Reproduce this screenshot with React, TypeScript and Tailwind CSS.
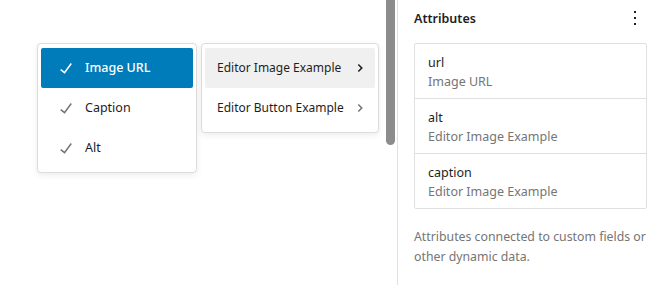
import React from "react";

const font = { fontFamily: '"Noto Sans", "Open Sans", sans-serif' };

function Check({ color }: { color: string }) {
  return (
    <svg width="24" height="24" viewBox="0 0 24 24" className="shrink-0">
      <path d="M16.7 7.1l-6.3 8.5-3.3-2.5-.9 1.2 4.5 3.4L17.9 7.9z" fill={color} />
    </svg>
  );
}

function Chevron({ color }: { color: string }) {
  return (
    <svg width="24" height="24" viewBox="0 0 24 24" className="shrink-0">
      <path
        d="M10.8622 8.04053L14.8477 12.0286L10.8622 16.0167L9.80162 14.9561L12.7258 12.0286L9.80162 9.10094L10.8622 8.04053Z"
        fill={color}
      />
    </svg>
  );
}

function MoreVertical() {
  return (
    <svg width="24" height="24" viewBox="0 0 24 24">
      <path d="M13 19h-2v-2h2v2zm0-6h-2v-2h2v2zm0-6h-2V5h2v2z" fill="#1e1e1e" />
    </svg>
  );
}

const fieldItems = [
  { label: "Image URL", active: true },
  { label: "Caption", active: false },
  { label: "Alt", active: false },
];

const sources = [
  { label: "Editor Image Example", active: true },
  { label: "Editor Button Example", active: false },
];

const attrs = [
  { name: "url", value: "Image URL" },
  { name: "alt", value: "Editor Image Example" },
  { name: "caption", value: "Editor Image Example" },
];

export default function App() {
  return (
    <div className="w-[658px] h-[285px] bg-white flex overflow-hidden" style={font}>
      <div className="w-[386px] shrink-0 pl-[37px] pt-[43px] flex items-start gap-[4px]">
        <div className="w-[160px] bg-white border border-[#dcdcdc] rounded-[4px] shadow-[0_2px_6px_rgba(0,0,0,0.08)] px-[3px] py-[4px] flex flex-col">
          {fieldItems.map((it) => (
            <div
              key={it.label}
              className={
                it.active
                  ? "h-[40px] flex items-center pl-[13px] rounded-[2px] bg-[#007cba] text-white"
                  : "h-[40px] flex items-center pl-[13px] rounded-[2px] text-[#1e1e1e]"
              }
            >
              <Check color={it.active ? "#ffffff" : "#757575"} />
              <span className={it.active ? "ml-[7px] text-[12.5px] font-medium" : "ml-[7px] text-[12.5px]"}>
                {it.label}
              </span>
            </div>
          ))}
        </div>
        <div className="w-[178px] bg-white border border-[#dcdcdc] rounded-[4px] shadow-[0_2px_6px_rgba(0,0,0,0.08)] px-[3px] py-[4px] flex flex-col">
          {sources.map((it) => (
            <div
              key={it.label}
              className={
                it.active
                  ? "h-[40px] flex items-center justify-between pl-[12px] pr-[3px] rounded-[2px] bg-[#f0f0f0] text-[#1e1e1e]"
                  : "h-[40px] flex items-center justify-between pl-[12px] pr-[3px] rounded-[2px] text-[#1e1e1e]"
              }
            >
              <span className="text-[12px] whitespace-nowrap">{it.label}</span>
              <Chevron color={it.active ? "#1e1e1e" : "#757575"} />
            </div>
          ))}
        </div>
      </div>
      <div className="w-[11px] shrink-0">
        <div className="w-[9px] h-[145px] bg-[#8c8c8c] rounded-b-[5px]" />
      </div>
      <div className="flex-1 border-l border-[#e0e0e0] pl-[16px] pr-[11px]">
        <div className="mt-[6px] h-[24px] flex items-center justify-between">
          <span className="pt-[2px] text-[12.5px] font-semibold text-[#1e1e1e]">Attributes</span>
          <MoreVertical />
        </div>
        <div className="mt-[13px] border border-[#e0e0e0] rounded-[2px]">
          {attrs.map((a, i) => (
            <div
              key={a.name}
              className={
                i > 0
                  ? "border-t border-[#e0e0e0] pl-[13px] pt-[9px] pb-[7px] text-[12.5px] leading-[19px]"
                  : "pl-[13px] pt-[9px] pb-[7px] text-[12.5px] leading-[19px]"
              }
            >
              <div className="text-[#1e1e1e]">{a.name}</div>
              <div className="text-[#757575]">{a.value}</div>
            </div>
          ))}
        </div>
        <p className="mt-[18px] text-[12.3px] leading-[20px] text-[#757575] whitespace-nowrap">
          Attributes connected to custom fields or
          <br />
          other dynamic data.
        </p>
      </div>
    </div>
  );
}
